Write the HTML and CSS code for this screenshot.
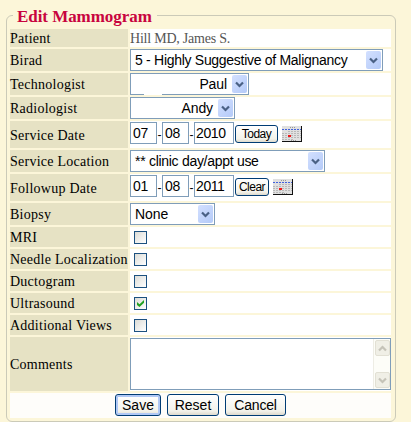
FILE: index.html
```html
<!DOCTYPE html>
<html lang="en">
<head>
<meta charset="utf-8">
<title>Edit Mammogram</title>
<link rel="stylesheet" href="styles.css">
</head>
<body>
<svg width="0" height="0" class="defs">
  <symbol id="chev" viewBox="0 0 9 7"><path d="M1 1.5 4.5 5 8 1.5" fill="none" stroke="currentColor" stroke-width="2.2"/></symbol>
  <symbol id="cal" viewBox="0 0 20 16">
    <rect width="20" height="16" fill="#111"/><rect width="19" height="15" fill="#e0e0e0"/>
    <path d="M0 3.5H19" stroke="#4262dc" stroke-dasharray="2 1"/>
    <path d="M6 5.5H19M0 7.5H19M0 9.5H19M0 11.5H19M0 13.5H12" stroke="#b8b8b8" stroke-dasharray="2 1"/>
    <path d="M8 1.5H13M9 14.5H15" stroke="#999" stroke-dasharray="1 1"/>
    <rect x="6" y="9" width="3" height="2" fill="#f01818"/>
  </symbol>
</svg>
<form class="panel">
  <h1 class="legend">Edit Mammogram</h1>
  <div class="grid">
    <div class="label">Patient</div><div class="cell patient"><span>Hill MD, James S.</span></div>
    <div class="label">Birad</div><div class="cell"><div class="select birad"><span>5 - Highly Suggestive of Malignancy</span><i><svg><use href="#chev"/></svg></i></div></div>
    <div class="label">Technologist</div><div class="cell"><div class="select tech"><span>Paul</span><i><svg><use href="#chev"/></svg></i></div></div>
    <div class="label">Radiologist</div><div class="cell"><div class="select radio"><span>Andy</span><i><svg><use href="#chev"/></svg></i></div></div>
    <div class="label">Service Date</div><div class="cell date"><span class="box">07</span><b>-</b><span class="box">08</span><b>-</b><span class="box year">2010</span><span class="btn small today">Today</span><svg class="cal"><use href="#cal"/></svg></div>
    <div class="label">Service Location</div><div class="cell"><div class="select loc"><span>** clinic day/appt use</span><i><svg><use href="#chev"/></svg></i></div></div>
    <div class="label">Followup Date</div><div class="cell date"><span class="box">01</span><b>-</b><span class="box">08</span><b>-</b><span class="box year">2011</span><span class="btn small clear">Clear</span><svg class="cal"><use href="#cal"/></svg></div>
    <div class="label">Biopsy</div><div class="cell"><div class="select biopsy"><span>None</span><i><svg><use href="#chev"/></svg></i></div></div>
    <div class="label">MRI</div><div class="cell"><span class="check"></span></div>
    <div class="label">Needle Localization</div><div class="cell"><span class="check"></span></div>
    <div class="label">Ductogram</div><div class="cell"><span class="check"></span></div>
    <div class="label">Ultrasound</div><div class="cell"><span class="check"><svg viewBox="0 0 7 7"><path d="M0 2V5L2.5 7 7 2.8V0L2.5 4.2Z" fill="#21a121"/></svg></span></div>
    <div class="label">Additional Views</div><div class="cell"><span class="check"></span></div>
    <div class="label">Comments</div><div class="cell"><div class="area"><div class="bar"><i class="up"><svg><use href="#chev"/></svg></i><i><svg><use href="#chev"/></svg></i></div></div></div>
    <div class="actions"><span class="btn save">Save</span><span class="btn reset">Reset</span><span class="btn cancel">Cancel</span></div>
  </div>
</form>
</body>
</html>
```
FILE: styles.css
```css
* { box-sizing: border-box; }
body { margin: 0; padding: 15px 15px 0 6px; height: 422px; overflow: hidden; background: #fcf6d9; font-family: "Liberation Sans", Arial, sans-serif; font-size: 14px; color: #000; }
.defs { display: block; height: 0; }
.panel { width: 390px; height: 407px; border: 1px solid #cbcab8; border-radius: 6px; padding: 0 4px 0 3px; }
.legend { width: max-content; height: 18px; margin: -9px 0 4px 3px; padding: 0 5px 0 4px; background: #fcf6d9; color: #c8043f; font: bold 17px/20px "Liberation Serif", serif; letter-spacing: -.05px; white-space: nowrap; }
.grid { display: grid; grid-template-columns: 118px 261px; grid-template-rows: 18px repeat(3, 22px) 27px 22px 27px 22px repeat(5, 20px) 54px 25px; gap: 2px; }
.label { display: flex; align-items: center; padding-top: 2px; background: #e6e2c4; font: 14px/16px "Liberation Serif", serif; letter-spacing: .25px; white-space: nowrap; }
.cell { display: flex; align-items: center; background: #fff; white-space: nowrap; min-width: 0; }
.patient { padding-top: 2px; font: 14px/16px "Liberation Serif", serif; letter-spacing: -.22px; color: #555; }
.select { display: flex; align-items: center; justify-content: space-between; height: 22px; border: 1px solid #7f9db9; padding: 0 1px 0 4px; background: #fff; letter-spacing: -.29px; }
.select i { display: flex; align-items: center; justify-content: center; width: 15px; height: 18px; border-radius: 2px; background: linear-gradient(135deg, #d3e0ff, #b4caf8); color: #4a6185; }
.select svg, .bar svg { width: 9px; height: 7px; }
.birad { width: 253px; }
.tech { width: 119px; position: relative; }
.tech::after { content: ""; position: absolute; left: 13px; bottom: -1px; width: 18px; height: 1px; background: #fff; }
.tech, .radio { justify-content: flex-end; gap: 5px; letter-spacing: -.1px; }
.radio { width: 105px; }
.loc { width: 195px; }
.biopsy { width: 85px; letter-spacing: -.1px; }
.date { align-items: flex-start; padding-top: 1px; }
.date b { width: 5px; font-weight: normal; font-size: 12px; line-height: 26px; text-align: center; }
.box { width: 27px; height: 22px; border: 1px solid #7f9db9; padding-left: 2px; line-height: 20px; letter-spacing: -.4px; }
.year { width: 40px; padding-left: 1px; }
.cal { width: 20px; height: 16px; margin: 4px 0 0 4px; }
.btn { display: flex; align-items: center; justify-content: center; height: 22px; border: 1px solid #003c74; border-radius: 3px; background: linear-gradient(#fff, #f3f2ea 80%, #dedacd); }
.small { height: 18px; margin: 3px 0 0 1px; font-size: 12px; letter-spacing: -.5px; }
.today { width: 43px; }
.clear { width: 34px; }
.check { display: flex; align-items: center; justify-content: center; width: 13px; height: 13px; margin-left: 4px; margin-top: 1px; border: 1px solid #1c5180; background: linear-gradient(135deg, #dcdcd7, #fff); }
.check svg { width: 7px; height: 7px; }
.area { width: 261px; height: 52px; border: 1px solid #7f9db9; display: flex; justify-content: flex-end; }
.bar { width: 17px; padding: 1px; display: flex; flex-direction: column; justify-content: space-between; background: #fdfdf8; border-left: 1px solid #eeede5; }
.bar i { display: flex; align-items: center; justify-content: center; width: 15px; height: 16px; border: 1px solid #e2e0d4; border-radius: 2px; background: #f0efe6; color: #c5c3b8; }
.up svg { transform: scaleY(-1); }
.actions { grid-column: 1 / 3; display: flex; align-items: flex-start; padding: 1px 0 0 105px; gap: 6px; background: #fefdfa; }
.save { width: 46px; box-shadow: inset 0 0 0 2px #b0c8f5; }
.reset { width: 52px; }
.cancel { width: 61px; letter-spacing: -.2px; }
```
